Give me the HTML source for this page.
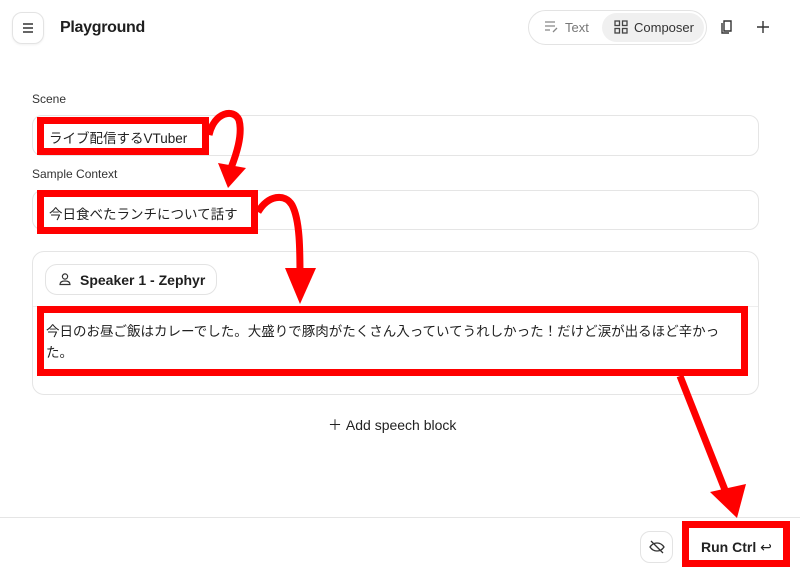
<!DOCTYPE html>
<html><head><meta charset="utf-8"><style>
*{box-sizing:border-box;margin:0;padding:0}
body{width:800px;height:570px;background:#fff;font-family:"Liberation Sans","Noto Sans CJK JP",sans-serif;color:#1f1f1f;position:relative;overflow:hidden}
.abs{position:absolute}
.menu{left:12px;top:12px;width:32px;height:32px;border:1px solid #e3e3e3;border-radius:10px;box-shadow:0 1px 2px rgba(0,0,0,.06)}
.title{left:60px;top:19px;font-size:16px;font-weight:bold;letter-spacing:-.3px}
.pill{left:528px;top:10px;width:179px;height:35px;border:1px solid #e3e3e3;border-radius:18px}
.comp{left:602px;top:13px;width:102px;height:29px;background:#f0f0f0;border-radius:15px}
.lbl{font-size:12px;color:#333}
.inp{left:32px;width:727px;border:1px solid #e5e5e5;border-radius:10px}
.rb{border:7px solid #f00;background:#fff;font-size:13.5px;color:#222}
.card{left:32px;top:251px;width:727px;height:144px;border:1px solid #e5e5e5;border-radius:12px}
.sp{left:45px;top:264px;width:172px;height:31px;border:1px solid #e3e3e3;border-radius:12px;font-size:14px;font-weight:bold;padding:7px 0 0 34px}
</style></head><body>
<div class="abs menu"><svg width="30" height="30" viewBox="0 0 30 30"><path d="M10 11h10M10 15h10M10 19h10" stroke="#333" stroke-width="1.5"/></svg></div>
<div class="abs title">Playground</div>
<div class="abs pill"></div>
<div class="abs comp"></div>
<svg class="abs" style="left:543px;top:19px" width="18" height="16" viewBox="0 0 18 16"><path d="M2 3h10M2 7h10M2 11h5M10 13l4-4" stroke="#888" stroke-width="1.3" fill="none"/></svg>
<div class="abs" style="left:565px;top:20px;font-size:13px;color:#777">Text</div>
<svg class="abs" style="left:614px;top:20px" width="14" height="14" viewBox="0 0 14 14"><g stroke="#444" stroke-width="1.3" fill="none"><rect x="1" y="1" width="4.5" height="4.5"/><rect x="8.5" y="1" width="4.5" height="4.5"/><rect x="1" y="8.5" width="4.5" height="4.5"/><rect x="8.5" y="8.5" width="4.5" height="4.5"/></g></svg>
<div class="abs" style="left:634px;top:20px;font-size:13px;color:#333">Composer</div>
<svg class="abs" style="left:719px;top:19px" width="16" height="16" viewBox="0 0 16 16"><path d="M5 2h7v10H5zM3 4v10h7" stroke="#333" stroke-width="1.4" fill="none"/></svg>
<svg class="abs" style="left:756px;top:20px" width="14" height="14" viewBox="0 0 14 14"><path d="M7 1v12M1 7h12" stroke="#333" stroke-width="1.4"/></svg>

<div class="abs lbl" style="left:32px;top:92px">Scene</div>
<div class="abs inp" style="top:115px;height:41px"></div>
<div class="abs rb" style="left:37px;top:117px;width:172px;height:38px;padding:3px 0 0 5px">ライブ配信するVTuber</div>
<div class="abs lbl" style="left:32px;top:167px">Sample Context</div>
<div class="abs inp" style="top:190px;height:40px"></div>
<div class="abs rb" style="left:37px;top:190px;width:221px;height:44px;padding:6px 0 0 5px">今日食べたランチについて話す</div>

<div class="abs card"></div>
<div class="abs sp">Speaker 1 - Zephyr</div>
<svg class="abs" style="left:58px;top:272px" width="14" height="14" viewBox="0 0 14 14"><circle cx="7" cy="4.5" r="2.6" stroke="#333" stroke-width="1.2" fill="none"/><path d="M2 12.5c0-2.5 2.2-3.5 5-3.5s5 1 5 3.5z" stroke="#333" stroke-width="1.2" fill="none"/></svg>
<div class="abs" style="left:33px;top:306px;width:725px;border-top:1px solid #eee"></div>
<div class="abs rb" style="left:37px;top:306px;width:711px;height:70px;padding:8px 0 0 2px;line-height:21px;font-size:13.5px">今日のお昼ご飯はカレーでした。大盛りで豚肉がたくさん入っていてうれしかった！だけど涙が出るほど辛かった。</div>

<div class="abs" style="left:328px;top:415px;font-size:14px;color:#222">＋&nbsp;Add speech block</div>

<div class="abs" style="left:0;top:517px;width:800px;border-top:1px solid #e5e5e5"></div>
<div class="abs" style="left:640px;top:531px;width:33px;height:32px;border:1px solid #e3e3e3;border-radius:10px"></div>
<svg class="abs" style="left:648px;top:539px" width="18" height="16" viewBox="0 0 18 16"><path d="M2 8c2-3 5-4 7-4s5 1 7 4c-2 3-5 4-7 4S4 11 2 8zM3 2l12 12" stroke="#333" stroke-width="1.3" fill="none"/></svg>
<div class="abs" style="left:682px;top:521px;width:108px;height:46px;border:7px solid #f00;background:#fff;font-size:14px;font-weight:bold;padding:11px 0 0 12px;color:#222">Run Ctrl <span style="font-weight:normal">↩</span></div>

<svg class="abs" style="left:0;top:0" width="800" height="570" viewBox="0 0 800 570">
<g fill="none" stroke="#f00" stroke-width="7">
<path d="M209 135C214 112 234 108 239 120C243 135 236 155 231 168"/>
<path d="M258 212C268 195 285 193 292 205C300 220 300 250 300 278"/>
<path d="M680 376L725 490"/>
</g>
<g fill="#f00">
<polygon points="218,163 246,168 228,188"/>
<polygon points="285,268 316,268 300,304"/>
<polygon points="710,492 746,484 737,518"/>
</g>
</svg>
</body></html>
